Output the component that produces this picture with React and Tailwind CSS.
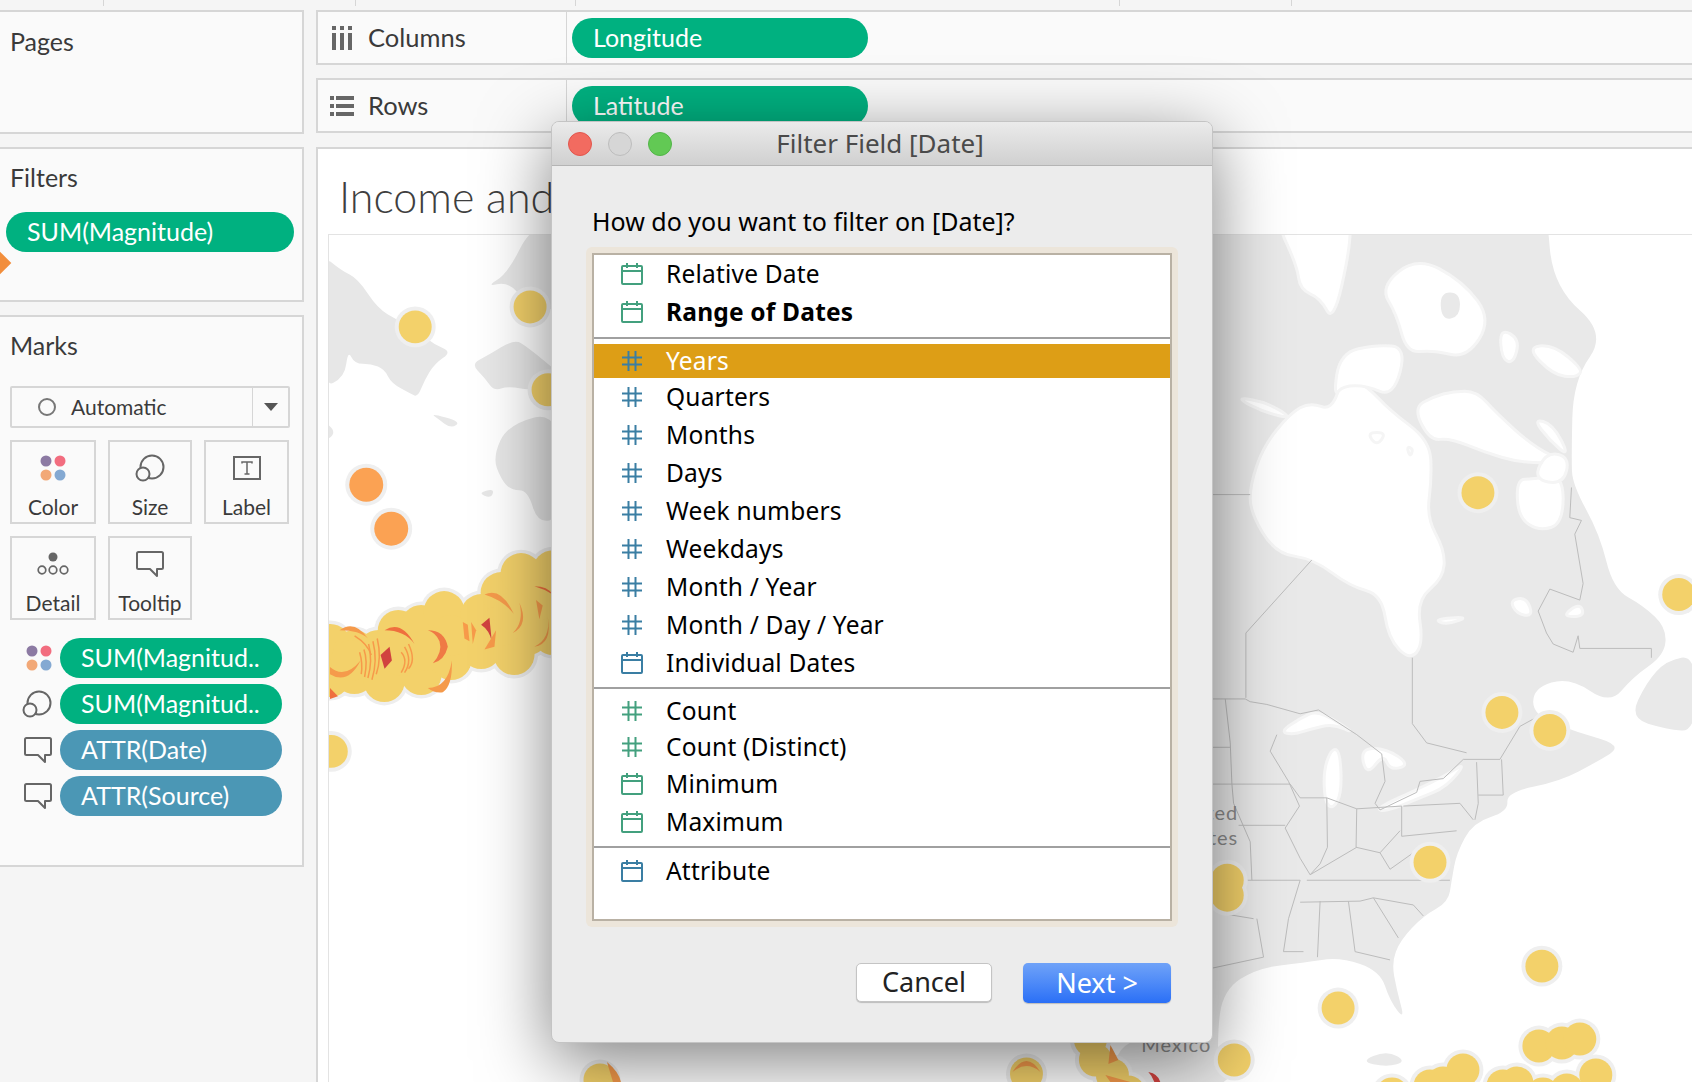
const GREEN = '#43a07e';
const BLUE = '#3a7ea3';

function CalendarIcon({ color }) {
  return (
    <svg width="24" height="22" viewBox="0 0 24 22" fill="none" stroke={color} strokeWidth="2">
      <rect x="2" y="3" width="20" height="18" rx="1" />
      <path d="M2 8h20M7 0v5M17 0v5" />
    </svg>
  );
}

function HashIcon({ color }) {
  return (
    <svg width="24" height="22" viewBox="0 0 24 22" fill="none" stroke={color} strokeWidth="2">
      <path d="M8.5 1v20M15.5 1v20M2 7.5h20M2 14.5h20" />
    </svg>
  );
}

function ColorIcon() {
  return (
    <svg width="26" height="26" viewBox="0 0 26 26">
      <circle cx="6" cy="6" r="5.5" fill="#8c7aa3" />
      <circle cx="20" cy="6" r="5.5" fill="#f26d7f" />
      <circle cx="6" cy="20" r="5.5" fill="#f2a877" />
      <circle cx="20" cy="20" r="5.5" fill="#84a9d2" />
    </svg>
  );
}

function SizeIcon() {
  return (
    <svg width="30" height="28" viewBox="0 0 30 28" fill="none" stroke="#666" strokeWidth="2">
      <circle cx="17" cy="13" r="11.5" />
      <circle cx="8" cy="20" r="6.5" fill="#fafafa" />
    </svg>
  );
}

function LabelIcon() {
  return (
    <svg width="28" height="24" viewBox="0 0 28 24" fill="none" stroke="#666" strokeWidth="2">
      <rect x="1" y="1" width="26" height="22" />
      <path d="M9 7.5V6h10v1.5M14 6v12M11.5 18h5" strokeWidth="1.5" />
    </svg>
  );
}

function DetailIcon() {
  return (
    <svg width="32" height="24" viewBox="0 0 32 24" fill="none" stroke="#666" strokeWidth="1.7">
      <circle cx="16" cy="5" r="4.5" fill="#666" stroke="none" />
      <circle cx="5" cy="18" r="3.8" />
      <circle cx="16" cy="18" r="3.8" />
      <circle cx="27" cy="18" r="3.8" />
    </svg>
  );
}

function TooltipIcon() {
  return (
    <svg width="28" height="26" viewBox="0 0 28 26" fill="none" stroke="#666" strokeWidth="2">
      <path d="M2.5 1h23a1.5 1.5 0 0 1 1.5 1.5v14a1.5 1.5 0 0 1-1.5 1.5H21v7l-7-7H2.5A1.5 1.5 0 0 1 1 16.5v-14A1.5 1.5 0 0 1 2.5 1z" strokeLinejoin="round" />
    </svg>
  );
}

function ColumnsIcon() {
  return (
    <svg width="20" height="24" viewBox="0 0 20 24" fill="#666">
      <rect x="0" y="0" width="4" height="4" />
      <rect x="8" y="0" width="4" height="4" />
      <rect x="16" y="0" width="4" height="4" />
      <rect x="0" y="7" width="4" height="17" />
      <rect x="8" y="7" width="4" height="17" />
      <rect x="16" y="7" width="4" height="17" />
    </svg>
  );
}

function RowsIcon() {
  return (
    <svg width="24" height="20" viewBox="0 0 24 20" fill="#666">
      <rect x="0" y="0" width="4" height="4" />
      <rect x="6" y="0" width="18" height="4" />
      <rect x="0" y="8" width="4" height="4" />
      <rect x="6" y="8" width="18" height="4" />
      <rect x="0" y="16" width="4" height="4" />
      <rect x="6" y="16" width="18" height="4" />
    </svg>
  );
}

function Pill({ children, color = 'green', className = '' }) {
  const bg = color === 'green' ? 'bg-[#00b180]' : 'bg-[#4b97b5]';
  return (
    <div className={`flex h-10 items-center rounded-[20px] ${bg} text-[25px] text-white ${className}`}>
      {children}
    </div>
  );
}

function MarkCard({ icon, label }) {
  return (
    <div className="flex h-[84px] flex-col items-center border-2 border-[#d6d6d6]">
      <div className="flex h-[52px] items-center">{icon}</div>
      <span className="text-[21px] leading-[26px] text-[#3a3a3a]">{label}</span>
    </div>
  );
}

function MarkPill({ icon, label, color }) {
  return (
    <div className="flex items-center">
      <div className="flex w-[60px] justify-end pr-2">{icon}</div>
      <Pill color={color} className="w-[222px] pl-[21px]">{label}</Pill>
    </div>
  );
}

function Shelf({ icon, label, pill, className = '' }) {
  return (
    <div className={`flex h-[55px] border-y-2 border-l-2 border-[#d6d6d6] bg-[#fafafa] ${className}`}>
      <div className="flex w-[249px] items-center border-r border-[#d6d6d6]">
        <div className="flex w-[48px] justify-center">{icon}</div>
        <span className="ml-[2px] text-[25.5px] text-[#3a3a3a]">{label}</span>
      </div>
      <div className="flex items-center pl-[5px]">
        <Pill className="w-[296px] pl-[21px]">{pill}</Pill>
      </div>
    </div>
  );
}

function Row({ icon, label, color, height = 'h-[38px]', bold, selected }) {
  return (
    <div className={`flex items-center pl-[26px] ${height} ${selected ? 'bg-[#dd9e16] text-white' : 'text-black'}`}>
      {icon === 'cal' ? <CalendarIcon color={color} /> : <HashIcon color={color} />}
      <span className={`ml-[22px] text-[24.5px] tracking-[0.2px] ${bold ? 'font-bold' : ''}`}>{label}</span>
    </div>
  );
}

function Separator() {
  return <div className="h-[2px] bg-[#a0a0a0]" />;
}

// rounds a list of [x, y] corners into a closed coastline path
function smooth(pts) {
  const mid = (a, b) => `${(a[0] + b[0]) / 2} ${(a[1] + b[1]) / 2}`;
  let d = `M${mid(pts[pts.length - 1], pts[0])}`;
  pts.forEach((p, i) => {
    d += `Q${p[0]} ${p[1]} ${mid(p, pts[(i + 1) % pts.length])}`;
  });
  return d + 'Z';
}

const LAND_RIGHT = [
  [[-50, -10], [-50, -20], [-40, -20], [1030, -20], [1040, -20], [1060, 120], [1220, 205], [1120, 290], [1115, 430], [1118, 480], [1200, 570], [1240, 670], [1330, 700], [1400, 740], [1395, 790], [1300, 830], [1230, 880], [1110, 830], [1000, 850], [1000, 900], [1130, 930], [1270, 955], [1190, 985], [1080, 1020], [920, 1040], [925, 1075], [820, 1095], [770, 1150], [755, 1200], [745, 1240], [670, 1265], [600, 1310], [575, 1350], [590, 1400], [615, 1455], [570, 1420], [540, 1365], [420, 1340], [310, 1350], [170, 1360], [70, 1400], [50, 1480], [60, 1600], [-40, 1600], [-50, 1600], [-50, 1590]],
  [[1290, 905], [1340, 840], [1400, 800], [1490, 790], [1490, 930], [1400, 925]],
  [[480, 1530], [560, 1510], [620, 1530], [560, 1540]],
];

const WATER_RIGHT = [
  [[150, 530], [150, 480], [190, 410], [270, 350], [330, 330], [395, 345], [430, 280], [500, 300], [570, 345], [690, 400], [695, 470], [680, 540], [735, 600], [730, 650], [650, 690], [670, 770], [630, 800], [565, 760], [545, 680], [450, 665], [340, 615], [225, 605]],
  [[640, 340], [700, 320], [760, 310], [830, 310], [890, 350], [1000, 410], [1100, 440], [960, 440], [850, 420], [750, 395], [690, 400]],
  [[950, 470], [1000, 470], [1090, 460], [1090, 550], [1020, 565], [955, 540]],
  [[1040, 420], [1110, 430], [1090, 480], [1000, 470]],
  [[540, 120], [650, 65], [790, 110], [875, 180], [800, 250], [700, 235], [620, 240], [590, 170]],
  [[400, 320], [420, 240], [530, 225], [620, 230], [580, 320], [500, 300], [430, 300]],
  [[220, -10], [450, -10], [450, 50], [400, 185], [360, 140], [300, 125], [290, 80]],
  [[900, 195], [960, 215], [940, 260], [905, 250]],
  [[980, 230], [1060, 225], [1150, 270], [1130, 285], [1060, 280]],
  [[1000, 360], [1060, 370], [1110, 430], [1050, 400]],
  [[100, 320], [200, 330], [280, 360], [200, 350]],
  [[500, 385], [560, 385], [530, 410]],
  [[620, 410], [640, 415], [630, 430]],
  [[240, 930], [300, 905], [355, 890], [470, 935], [400, 915], [330, 925], [280, 935]],
  [[370, 1000], [395, 960], [420, 965], [425, 1040], [400, 1070], [375, 1060]],
  [[480, 960], [560, 960], [630, 990], [570, 1000], [550, 970], [500, 1010]],
  [[525, 1070], [650, 1035], [735, 1010], [800, 985], [740, 1030], [660, 1050], [560, 1075]],
  [[700, 725], [810, 720], [740, 735]],
  [[930, 690], [980, 685], [1000, 720], [950, 715]],
  [[1085, 720], [1140, 695], [1155, 720]],
];

const LINES_RIGHT = [
  'M36 870L135 870L150 875L200 880L300 897L355 890L470 935L545 970L555 1020L525 1060L540 1072L650 1040L660 1020L730 1015L790 980L900 980L960 920L1020 900',
  'M36 498L150 498', 'M335 617L137 750L137 868', 'M637 795L637 915L680 950L800 968',
  'M1115 485L1110 540L1145 545L1125 570L1150 660L1140 690L1050 670L1015 710L1040 750L1060 770L1120 785L1135 755L1140 778L1355 778L1355 795',
  'M75 870L90 950L95 1025L36 1025', 'M36 958L90 958', 'M95 1025L270 1025L300 1050L380 1050L470 1070L605 1065L605 1120L770 1110',
  'M230 935L210 965L265 1020L298 1065L255 1105L300 1160L330 1190',
  'M95 1025L100 1060L150 1130L155 1200L36 1200', 'M115 1100L255 1100', 'M155 1200L300 1200L265 1270L250 1330L310 1330',
  'M380 1050L382 1140L360 1170L330 1190', 'M470 1070L468 1140L540 1150L600 1110', 'M330 1190L470 1140', 'M540 1150L570 1180L640 1150',
  'M300 1240L480 1238L520 1232L640 1245L670 1265', 'M320 1200L750 1200', 'M360 1238L352 1340', 'M445 1238L465 1330L570 1345', 'M520 1232L595 1305',
  'M170 1270L190 1340L36 1360', 'M830 985L835 1060L825 1090', 'M905 980L910 1045L835 1045', 'M610 1065L780 1060L820 1090', 'M160 1270L60 1260L36 1250',
];

const LAND_LEFT = [
  [[0, 60], [60, 90], [110, 105], [170, 160], [230, 180], [300, 205], [340, 225], [392, 238], [340, 260], [310, 290], [290, 320], [270, 315], [210, 295], [190, 270], [150, 260], [100, 260], [80, 235], [70, 285], [0, 305]],
  [[0, 360], [48, 385], [0, 405]],
  [[630, 10], [720, 10], [720, 170], [620, 150], [560, 110], [495, 120], [560, 95]],
  [[450, 260], [500, 245], [580, 215], [620, 230], [680, 260], [720, 280], [640, 310], [560, 300], [520, 310], [490, 285]],
  [[515, 430], [560, 370], [720, 345], [720, 540], [650, 550], [620, 490], [570, 490], [540, 470]],
  [[470, 495], [520, 487], [510, 505]],
  [[328, 350], [420, 365], [390, 378], [350, 360]],
];

const DOTS = [
  [414, 326], [529, 306], [547, 389], [1478, 492], [1679, 594], [1502, 712], [1550, 730], [1430, 862],
  [1542, 966], [1338, 1008], [1227, 880], [1227, 895], [1234, 1060], [1539, 1046], [1562, 1043], [1580, 1039],
  [1596, 1075], [1463, 1070], [1392, 1094], [1430, 1086], [1443, 1083], [1503, 1086], [1517, 1083], [1543, 1094], [1567, 1090],
  [330, 751], [599, 1080], [1026, 1074], [1095, 1060], [1112, 1075], [1128, 1092], [1090, 1040],
];

const BAND = [
  [329, 644], [353, 650], [377, 650], [397, 630], [420, 625], [443, 611], [480, 614], [500, 592], [520, 573], [552, 570],
  [329, 676], [353, 673], [383, 681], [420, 674], [450, 659], [480, 648], [513, 654], [527, 634], [552, 634],
  [350, 660], [400, 655], [450, 635], [500, 625], [535, 600], [425, 650], [512, 612],
];

const CRESCENTS = [
  ['M55 745Q100 725 140 760Q115 745 55 745Z', '#f59a4b'],
  ['M26 812Q70 835 118 800Q80 845 26 825Z', '#f59a4b'],
  ['M320 745Q370 745 380 775Q370 800 335 805Q365 785 355 765Q345 750 320 745Z', '#ef7a45'],
  ['M320 850Q380 850 392 800Q395 845 365 858Q340 860 320 850Z', '#f59a4b'],
  ['M190 745Q240 725 280 770Q250 745 190 745Z', '#ef6f3e'],
  ['M490 680Q540 665 578 715Q545 690 490 680Z', '#f59a4b'],
  ['M480 735L505 722L512 765Q505 745 480 735Z', '#d1433f'],
  ['M178 790L205 775L212 800L190 815Z', '#d1433f'],
  ['M640 775Q690 760 680 720Q695 770 640 775Z', '#f59a4b'],
  ['M645 690L665 700L655 725Z', '#f59a4b'],
  ['M640 665Q680 665 695 680Q670 670 640 665Z', '#ef6f3e'],
  ['M575 750Q610 730 595 695Q625 735 575 750Z', '#f59a4b'],
  ['M425 730L440 735L445 765L430 760Z', '#f79a4a'],
  ['M450 730L465 745L455 770Z', '#f79a4a'],
  ['M490 780L525 745L520 775Z', '#f79a4a'],
  ['M26 850L50 865L26 870Z', '#ef6f3e'],
];

const STREAKS = [
  'M115 785Q125 805 120 825', 'M128 780Q140 800 130 830', 'M142 770Q155 800 140 832', 'M155 765Q170 800 152 835', 'M168 760Q182 795 165 825',
  'M100 755Q140 770 150 790', 'M240 785Q262 800 240 822', 'M250 775Q275 800 250 822', 'M262 770Q285 800 262 815',
];

function MapView() {
  return (
    <svg width="1364" height="848" viewBox="328 234 1364 848" className="block border-l border-t border-[#e3e3e3]">
      <rect x="328" y="234" width="1364" height="848" fill="#fff" />
      <g transform="translate(1200 220) scale(0.3333 0.55)">
        {LAND_RIGHT.map((pts) => <path key={pts[0][0]} d={smooth(pts)} fill="#e9e9e9" />)}
        {WATER_RIGHT.map((pts) => (
          <path key={`${pts[0]}`} d={smooth(pts)} fill="#fff" stroke="#f5f5f5" strokeWidth="3" vectorEffect="non-scaling-stroke" />
        ))}
        <path d={smooth([[720, 130], [780, 130], [780, 175], [725, 180]])} fill="#e9e9e9" />
        {LINES_RIGHT.map((d) => (
          <path key={d} d={d} fill="none" stroke="#bcbcbc" strokeWidth="1" vectorEffect="non-scaling-stroke" />
        ))}
      </g>
      <g transform="translate(320 220) scale(0.3333 0.55)" fill="#e7e7e7">
        {LAND_LEFT.map((pts) => <path key={`${pts[0]}`} d={smooth(pts)} />)}
      </g>
      <path d={smooth([[1120, 1035], [1220, 1035], [1240, 1090], [1110, 1090]])} fill="#e9e9e9" />
      <g fontFamily="Lato, sans-serif" fontSize="20" fill="#8a8a8a" textAnchor="end" letterSpacing="1">
        <text x="1238" y="820">United</text>
        <text x="1238" y="845">States</text>
        <text x="1211" y="1052">Mexico</text>
      </g>
      {BAND.map(([x, y]) => <circle key={`h${x}${y}`} cx={x} cy={y} r="24" fill="#eeeeee" />)}
      {DOTS.map(([x, y]) => <circle key={`o${x}${y}`} cx={x} cy={y} r="20.5" fill="#efefef" />)}
      {[[365, 484], [390, 528]].map(([x, y]) => (
        <g key={x}>
          <circle cx={x} cy={y} r="21" fill="#efefef" />
          <circle cx={x} cy={y} r="17" fill="#fba253" />
        </g>
      ))}
      {DOTS.map(([x, y]) => <circle key={`d${x}${y}`} cx={x} cy={y} r="16.5" fill="#f3d16a" />)}
      {BAND.map(([x, y]) => <circle key={`b${x}${y}`} cx={x} cy={y} r="20.5" fill="#f3d16a" />)}
      <g transform="translate(320 220) scale(0.3333 0.55)">
        {CRESCENTS.map(([d, fill]) => <path key={d} d={d} fill={fill} />)}
        {STREAKS.map((d) => (
          <path key={d} d={d} fill="none" stroke="#f79a4a" strokeWidth="1.5" vectorEffect="non-scaling-stroke" />
        ))}
      </g>
      <path d="M1012 1072Q1026 1050 1040 1072Q1026 1060 1012 1072Z" fill="#f59a4b" />
      <path d="M606 1062Q618 1072 620 1082L612 1082Z" fill="#f59a4b" />
      <path d="M1110 1045L1118 1060L1108 1064Z M1105 1075L1130 1082L1110 1082Z" fill="#f59a4b" />
      <path d="M1148 1072Q1158 1074 1160 1082L1154 1082Q1152 1076 1148 1072Z" fill="#d1433f" />
    </svg>
  );
}

export default function App() {
  return (
    <div className="relative h-[1082px] w-[1692px] overflow-hidden bg-[#f5f5f5] font-['Lato',sans-serif]">
      <div className="flex h-[10px] items-start">
        <div className="h-[6px] w-[104px] border-r border-[#d6d6d6]" />
        <div className="h-[6px] w-[252px] border-r border-[#d6d6d6]" />
        <div className="h-[6px] w-[220px] border-r border-[#d6d6d6]" />
        <div className="h-[6px] w-[544px] border-r border-[#d6d6d6]" />
        <div className="h-[6px] w-[172px] border-r border-[#d6d6d6]" />
      </div>

      <div className="flex">
        <aside className="relative flex w-[304px] flex-col">
          <section className="h-[124px] border-y-2 border-r-2 border-[#d6d6d6] bg-[#fafafa] pl-[10px] pt-[11px] text-[25px] text-[#3a3a3a]">
            Pages
          </section>
          <section className="mt-[13px] h-[155px] border-y-2 border-r-2 border-[#d6d6d6] bg-[#fafafa] pl-[10px] pt-[10px] text-[25px] text-[#3a3a3a]">
            Filters
            <Pill className="-ml-1 mt-[15px] w-[288px] pl-[21px]">SUM(Magnitude)</Pill>
          </section>
          <div className="absolute left-[-8px] top-[245px] h-[16px] w-[16px] rotate-45 bg-[#f28e3c]" />
          <section className="mt-[13px] h-[552px] border-y-2 border-r-2 border-[#d6d6d6] bg-[#fafafa] pt-[10px] text-[25px] text-[#3a3a3a]">
            <div className="pl-[10px]">Marks</div>
            <div className="ml-[10px] mt-[21px] flex h-[42px] w-[280px] items-center rounded-[2px] border-2 border-[#d6d6d6]">
              <div className="flex flex-1 items-center pl-[26px] text-[21px]">
                <span className="h-[18px] w-[18px] rounded-full border-2 border-[#777]" />
                <span className="ml-[15px]">Automatic</span>
              </div>
              <div className="flex h-full w-[36px] items-center justify-center border-l border-[#d6d6d6]">
                <span className="h-0 w-0 border-x-[7px] border-t-[8px] border-x-transparent border-t-[#555]" />
              </div>
            </div>
            <div className="ml-[10px] mt-[12px] grid w-[280px] grid-cols-[86px_84px_85px] gap-x-[12px] gap-y-[12px]">
              <MarkCard icon={<ColorIcon />} label="Color" />
              <MarkCard icon={<SizeIcon />} label="Size" />
              <MarkCard icon={<LabelIcon />} label="Label" />
              <MarkCard icon={<DetailIcon />} label="Detail" />
              <MarkCard icon={<TooltipIcon />} label="Tooltip" />
            </div>
            <div className="mt-[18px] flex flex-col gap-[6px]">
              <MarkPill icon={<ColorIcon />} label="SUM(Magnitud.." color="green" />
              <MarkPill icon={<SizeIcon />} label="SUM(Magnitud.." color="green" />
              <MarkPill icon={<TooltipIcon />} label="ATTR(Date)" color="blue" />
              <MarkPill icon={<TooltipIcon />} label="ATTR(Source)" color="blue" />
            </div>
          </section>
        </aside>

        <main className="ml-[12px] flex h-[1072px] flex-1 flex-col">
          <Shelf icon={<ColumnsIcon />} label="Columns" pill="Longitude" />
          <Shelf icon={<RowsIcon />} label="Rows" pill="Latitude" className="mt-[13px]" />
          <section className="mt-[14px] flex-1 border-l-2 border-t-2 border-[#d6d6d6] bg-white">
            <h1 className="flex h-[85px] items-center pl-[21px] pt-3 text-[43px] font-light text-[#3f3f3f]">Income and</h1>
            <div className="ml-[10px]">
              <MapView />
            </div>
          </section>
        </main>
      </div>

      <div className="absolute left-[551px] top-[121px] flex h-[922px] w-[662px] flex-col overflow-hidden rounded-[8px] border border-[#c4c4c4] bg-[#ececec] font-['Noto_Sans',sans-serif] shadow-[0_18px_70px_rgba(0,0,0,0.5)]">
        <div className="relative flex h-[44px] shrink-0 items-center justify-center border-b border-[#b4b4b4] bg-gradient-to-b from-[#ebebeb] to-[#d0d0d0] text-[26px] text-[#4a4a4a]">
          <div className="absolute left-[16px] top-[10px] flex gap-4">
            <span className="h-6 w-6 rounded-full border border-[#e2564d] bg-[#f26b60]" />
            <span className="h-6 w-6 rounded-full border border-[#bdbdbd] bg-[#d6d6d6]" />
            <span className="h-6 w-6 rounded-full border border-[#52b548] bg-[#62c954]" />
          </div>
          <span className="ml-[-4px]">Filter Field [Date]</span>
        </div>
        <p className="ml-[40px] mt-[37px] h-[44px] shrink-0 text-[25px] leading-[36px] text-black">How do you want to filter on [Date]?</p>
        <div className="ml-[34px] h-[680px] w-[592px] shrink-0 rounded-[6px] bg-[#ece5da] p-[6px]">
          <div className="h-full border-2 border-[#b9b1a4] bg-white">
            <Row icon="cal" color={GREEN} label="Relative Date" />
            <Row icon="cal" color={GREEN} label="Range of Dates" bold />
            <div className="mt-[6px] mb-[5px]"><Separator /></div>
            <Row icon="hash" color={BLUE} label="Years" height="h-[34px]" selected />
            <Row icon="hash" color={BLUE} label="Quarters" />
            <Row icon="hash" color={BLUE} label="Months" />
            <Row icon="hash" color={BLUE} label="Days" />
            <Row icon="hash" color={BLUE} label="Week numbers" />
            <Row icon="hash" color={BLUE} label="Weekdays" />
            <Row icon="hash" color={BLUE} label="Month / Year" />
            <Row icon="hash" color={BLUE} label="Month / Day / Year" />
            <Row icon="cal" color={BLUE} label="Individual Dates" />
            <div className="mt-[5px] mb-[4px]"><Separator /></div>
            <Row icon="hash" color={GREEN} label="Count" height="h-[36px]" />
            <Row icon="hash" color={GREEN} label="Count (Distinct)" height="h-[36px]" />
            <Row icon="cal" color={GREEN} label="Minimum" />
            <Row icon="cal" color={GREEN} label="Maximum" />
            <div className="mt-[5px] mb-[4px]"><Separator /></div>
            <Row icon="cal" color={BLUE} label="Attribute" />
          </div>
        </div>
        <div className="mt-[36px] flex justify-end gap-[31px] pr-[41px]">
          <button className="flex h-[39px] w-[136px] items-center justify-center rounded-[5px] border border-[#c4c4c4] bg-white text-[27px] text-[#222] shadow-[0_1px_1px_rgba(0,0,0,0.2)]">
            Cancel
          </button>
          <button className="flex h-[40px] w-[148px] items-center justify-center rounded-[5px] bg-gradient-to-b from-[#6fa2f8] to-[#2a6ff6] text-[27px] text-white shadow-[0_1px_1px_rgba(0,0,0,0.2)]">
            Next &gt;
          </button>
        </div>
      </div>
    </div>
  );
}
